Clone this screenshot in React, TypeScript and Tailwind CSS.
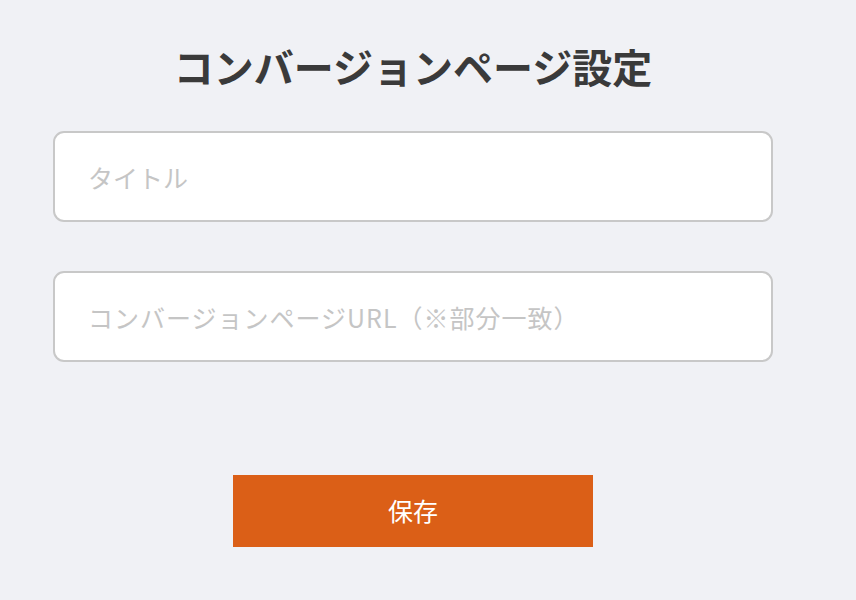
import React from "react";

export default function App() {
  const font = { fontFamily: '"Noto Sans CJK JP", "Noto Sans", sans-serif' };
  return (
    <div className="min-h-[600px] w-full bg-[#f0f1f5]" style={font}>
      <div className="ml-[53px] flex w-[720px] flex-col items-center pt-[36px]">
        <h1 className="h-[60px] text-[40px] font-bold leading-[60px] text-[#3a3a3a]">
          コンバージョンページ設定
        </h1>
        <input
          className="mt-[35px] h-[91px] w-[720px] rounded-[11px] border-2 border-[#c8c8c8] bg-white px-[33px] text-[25px] text-[#333] outline-none placeholder:text-[#c5c5c5]"
          placeholder="タイトル"
        />
        <input
          className="mt-[49px] h-[91px] w-[720px] rounded-[11px] border-2 border-[#c8c8c8] bg-white px-[33px] text-[25px] tracking-[1px] text-[#333] outline-none placeholder:text-[#c5c5c5]"
          placeholder="コンバージョンページURL（※部分一致）"
        />
        <button className="mt-[113px] h-[72px] w-[360px] bg-[#db5f17] text-[25px] text-white">
          保存
        </button>
      </div>
    </div>
  );
}
